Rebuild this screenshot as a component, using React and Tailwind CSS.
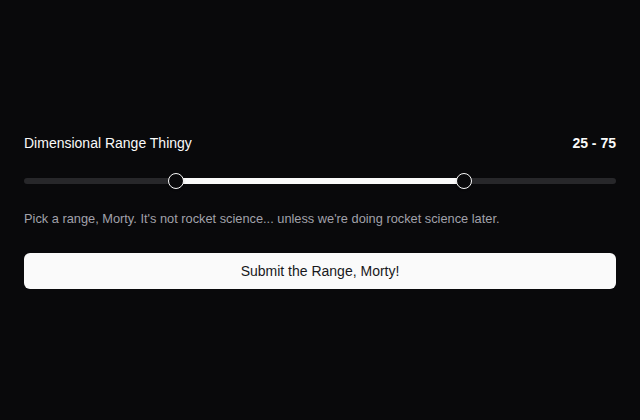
import { useState } from 'react';
import * as Slider from '@radix-ui/react-slider';

export default function App() {
  const [range, setRange] = useState([25, 75]);

  return (
    <div className="min-h-screen w-full bg-[#09090b] flex items-center px-6 pt-0.5 font-['Liberation_Sans',Arial,sans-serif]">
      <div className="w-full">
        <div className="flex items-center justify-between">
          <span className="text-sm font-medium text-[#fafafa]">Dimensional Range Thingy</span>
          <span className="text-sm font-semibold text-[#fafafa]">
            {range[0]} - {range[1]}
          </span>
        </div>

        <Slider.Root
          value={range}
          onValueChange={setRange}
          min={0}
          max={100}
          step={1}
          minStepsBetweenThumbs={1}
          className="relative mt-5 flex w-full touch-none select-none items-center h-4"
        >
          <Slider.Track className="relative h-1.5 w-full grow overflow-hidden rounded-full bg-[#27272a]">
            <Slider.Range className="absolute h-full bg-[#fafafa]" />
          </Slider.Track>
          <Slider.Thumb className="block h-4 w-4 rounded-full border border-[#fafafa] bg-[#09090b] shadow focus:outline-none" />
          <Slider.Thumb className="block h-4 w-4 rounded-full border border-[#fafafa] bg-[#09090b] shadow focus:outline-none" />
        </Slider.Root>

        <p className="mt-5 text-[12.8px] leading-5 text-[#a1a1aa]">
          Pick a range, Morty. It's not rocket science... unless we're doing rocket science later.
        </p>

        <button
          type="button"
          className="mt-6 h-9 w-full rounded-md bg-[#fafafa] text-sm text-[#18181b] hover:bg-[#e4e4e7]"
        >
          Submit the Range, Morty!
        </button>
      </div>
    </div>
  );
}
